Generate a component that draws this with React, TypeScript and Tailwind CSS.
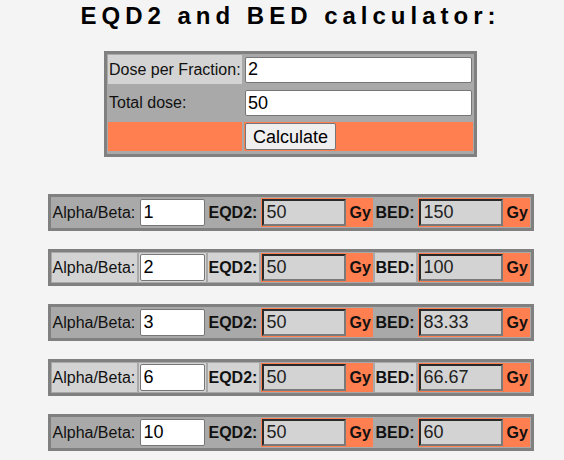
import { useState } from "react";

const alphaBetas = [1, 2, 3, 6, 10];

function fmt(n: number) {
  if (!isFinite(n)) return "";
  return String(Math.round(n * 100) / 100);
}

function ResultRow({ ab, dose, total, even }: { ab: number; dose: number; total: number; even: boolean }) {
  const [value, setValue] = useState(String(ab));
  const a = parseFloat(value);
  const eqd2 = (total * (dose + a)) / (2 + a);
  const bed = total * (1 + dose / a);
  const cell = even ? "bg-[#d3d3d3]" : "";

  return (
    <div className="flex h-[37px] w-[486px] gap-[2px] border-[3px] border-[#808080] bg-[#a9a9a9] p-[1px]">
      <div className={`${cell} flex w-[85px] items-center pl-[1px]`}>Alpha/Beta:</div>
      <div className={`${cell} flex w-[67px] items-center justify-center`}>
        <input
          value={value}
          onChange={(e) => setValue(e.target.value)}
          className="h-[27px] w-[65px] rounded-[2px] border border-[#767676] bg-white px-[3px] text-[18px] text-black outline-none"
        />
      </div>
      <div className={`${cell} flex w-[51px] items-center pl-[1px] font-bold`}>EQD2:</div>
      <div className="flex w-[112px] items-center gap-[4px] bg-[#ff7f50] pl-[1px] font-bold">
        <input
          readOnly
          value={fmt(eqd2)}
          className="h-[27px] w-[84px] border-2 border-t-[#2a2a2a] border-l-[#2a2a2a] border-b-[#7a7a7a] border-r-[#7a7a7a] bg-[#d3d3d3] px-[3px] text-[18px] font-normal text-[#222] outline-none"
        />
        Gy
      </div>
      <div className={`${cell} flex w-[41px] items-center pl-[1px] font-bold`}>BED:</div>
      <div className="flex w-[112px] items-center gap-[4px] bg-[#ff7f50] pl-[1px] font-bold">
        <input
          readOnly
          value={fmt(bed)}
          className="h-[27px] w-[84px] border-2 border-t-[#2a2a2a] border-l-[#2a2a2a] border-b-[#7a7a7a] border-r-[#7a7a7a] bg-[#d3d3d3] px-[3px] text-[18px] font-normal text-[#222] outline-none"
        />
        Gy
      </div>
    </div>
  );
}

export default function App() {
  const [doseInput, setDoseInput] = useState("2");
  const [totalInput, setTotalInput] = useState("50");
  const [values, setValues] = useState({ dose: 2, total: 50 });

  return (
    <div className="h-[460px] w-[564px] overflow-hidden bg-[#f4f4f4] font-['Liberation_Sans',Arial,sans-serif] text-[16px] text-[#111]">
      <div className="flex w-[580px] flex-col items-center pl-[1px]">
        <h1 className="pt-[2px] text-[24px] leading-[28px] font-bold tracking-[5px] text-black">
          EQD2 and BED calculator:
        </h1>

        <div className="mt-[21px] grid w-[373px] grid-cols-[134px_229px] grid-rows-[29px_34px_29px] gap-[2px] border-[3px] border-[#808080] bg-[#a9a9a9] pt-[1px] pb-[3px] pl-[1px] pr-[1px]">
          <div className="flex items-center bg-[#d3d3d3] pl-[1px]">Dose per Fraction:</div>
          <div className="flex items-center pl-[1px]">
            <input
              value={doseInput}
              onChange={(e) => setDoseInput(e.target.value)}
              className="h-[26px] w-[227px] rounded-[2px] border border-[#767676] bg-white px-[2px] text-[18px] text-black outline-none"
            />
          </div>
          <div className="flex items-center pl-[1px]">Total dose:</div>
          <div className="flex items-center pl-[1px]">
            <input
              value={totalInput}
              onChange={(e) => setTotalInput(e.target.value)}
              className="h-[26px] w-[227px] rounded-[2px] border border-[#767676] bg-white px-[2px] text-[18px] text-black outline-none"
            />
          </div>
          <div className="bg-[#ff7f50]"></div>
          <div className="flex items-center bg-[#ff7f50] pl-[1px]">
            <button
              onClick={() => setValues({ dose: parseFloat(doseInput), total: parseFloat(totalInput) })}
              className="h-[27px] w-[91px] rounded-[2px] border border-[#767676] bg-[#efefef] text-[18px] text-black"
            >
              Calculate
            </button>
          </div>
        </div>

        <div className="mt-[37px] flex flex-col gap-[18px]">
          {alphaBetas.map((ab, i) => (
            <ResultRow key={ab} ab={ab} dose={values.dose} total={values.total} even={i % 2 === 1} />
          ))}
        </div>
      </div>
    </div>
  );
}
